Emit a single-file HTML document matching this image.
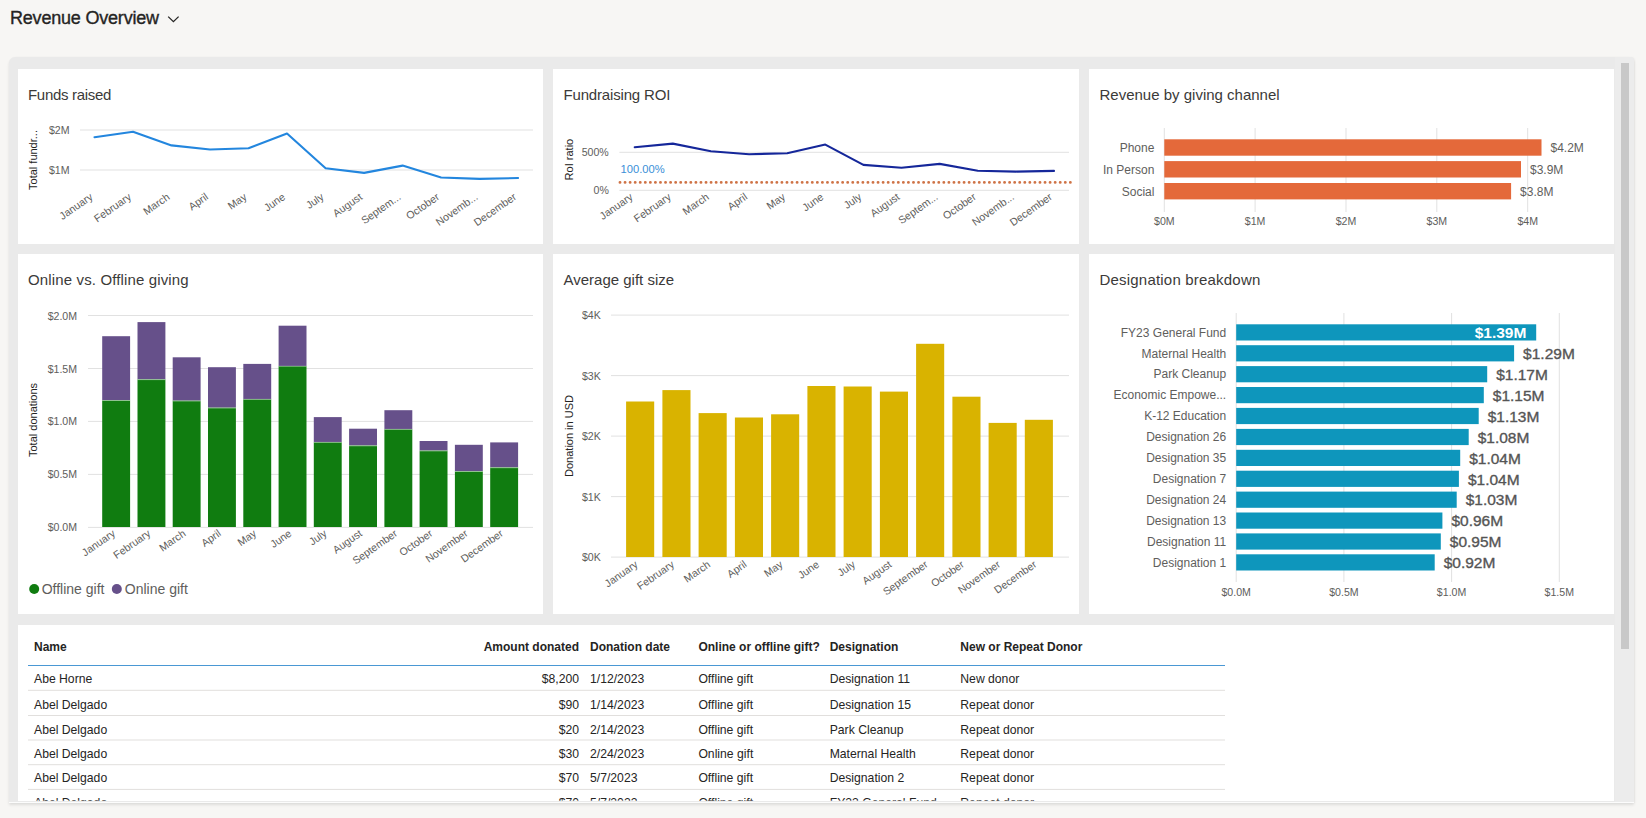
<!DOCTYPE html>
<html><head><meta charset="utf-8"><title>Revenue Overview</title>
<style>
html,body{margin:0;padding:0;}
body{width:1646px;height:818px;overflow:hidden;background:#f7f6f4;font-family:"Liberation Sans", sans-serif;position:relative;}
.hdr{position:absolute;left:10px;top:6px;font-size:18px;letter-spacing:-0.2px;-webkit-text-stroke:0.35px #252423;color:#252423;line-height:24px;white-space:nowrap;}
.chev{position:absolute;left:168px;top:14px;}
.frame{position:absolute;left:8.5px;top:57px;width:1625.5px;height:744.5px;background:#eaeaea;border-radius:6px 4px 0 0;border-bottom:1.7px solid #fcfcfc;box-shadow:0 2px 3px rgba(0,0,0,0.10), 1px 0 2px rgba(0,0,0,0.04);}
.inner{position:absolute;left:1614.5px;top:57px;width:19.5px;height:744.5px;background:#ececec;border-radius:0 4px 0 0;}
.card{position:absolute;background:#fff;}
.ttl{position:absolute;font-size:15px;color:#3b3a39;white-space:nowrap;line-height:18px;}
.thumb{position:absolute;left:1621px;top:63px;width:8px;height:586px;background:#c8c8c8;}
svg{position:absolute;left:0;top:0;}
svg text{font-family:"Liberation Sans", sans-serif;}
</style></head><body>
<div class="hdr">Revenue Overview</div>
<svg class="chev" width="14" height="12" viewBox="0 0 14 12" style="left:166px;top:13px"><path d="M2.2 3.6 L7.4 8.7 L12.6 3.6" fill="none" stroke="#252423" stroke-width="1.3"/></svg>
<div class="frame"></div><div class="inner"></div>
<div class="card" style="left:18px;top:69px;width:525px;height:175px"></div>
<div class="card" style="left:553px;top:69px;width:526px;height:175px"></div>
<div class="card" style="left:1089px;top:69px;width:525px;height:175px"></div>
<div class="card" style="left:18px;top:254px;width:525px;height:360px"></div>
<div class="card" style="left:553px;top:254px;width:526px;height:360px"></div>
<div class="card" style="left:1089px;top:254px;width:525px;height:360px"></div>
<div class="card" style="left:18px;top:625px;width:1596px;height:176px"></div>
<div class="thumb"></div>
<div class="ttl" style="left:28px;top:86px;letter-spacing:-0.3px">Funds raised</div>
<div class="ttl" style="left:563.5px;top:86px;letter-spacing:-0.17px">Fundraising ROI</div>
<div class="ttl" style="left:1099.5px;top:86px">Revenue by giving channel</div>
<div class="ttl" style="left:28px;top:271px;letter-spacing:0.14px">Online vs. Offline giving</div>
<div class="ttl" style="left:563.5px;top:271px">Average gift size</div>
<div class="ttl" style="left:1099.5px;top:271px;letter-spacing:0.2px">Designation breakdown</div>
<svg width="1646" height="818" viewBox="0 0 1646 818">
<defs><clipPath id="tc"><rect x="17" y="625" width="1597" height="175.8"/></clipPath></defs>
<line x1="80" y1="130" x2="533" y2="130" stroke="#e1e1e1" stroke-width="1"/>
<line x1="80" y1="170" x2="533" y2="170" stroke="#e1e1e1" stroke-width="1"/>
<text x="69.5" y="134.0" font-size="10.6" fill="#605e5c" text-anchor="end" font-weight="normal" >$2M</text>
<text x="69.5" y="174.0" font-size="10.6" fill="#605e5c" text-anchor="end" font-weight="normal" >$1M</text>
<text x="0" y="0" font-size="11" fill="#252423" text-anchor="middle" transform="translate(36.5,160) rotate(-90)">Total fundr...</text>
<polyline fill="none" stroke="#2386de" stroke-width="2.1" stroke-linejoin="round" stroke-linecap="round" points="94.5,137.2 133.0,131.8 171.5,145.4 210.0,149.5 248.5,148.3 287.0,133.5 325.6,168.3 364.1,172.9 402.6,165.6 441.1,177.5 479.6,178.9 518.1,178.0"/>
<text x="0" y="0" font-size="10.6" fill="#605e5c" text-anchor="end" transform="translate(93.5,198.5) rotate(-35)">January</text>
<text x="0" y="0" font-size="10.6" fill="#605e5c" text-anchor="end" transform="translate(132.0,198.5) rotate(-35)">February</text>
<text x="0" y="0" font-size="10.6" fill="#605e5c" text-anchor="end" transform="translate(170.5,198.5) rotate(-35)">March</text>
<text x="0" y="0" font-size="10.6" fill="#605e5c" text-anchor="end" transform="translate(209.0,198.5) rotate(-35)">April</text>
<text x="0" y="0" font-size="10.6" fill="#605e5c" text-anchor="end" transform="translate(247.5,198.5) rotate(-35)">May</text>
<text x="0" y="0" font-size="10.6" fill="#605e5c" text-anchor="end" transform="translate(286.0,198.5) rotate(-35)">June</text>
<text x="0" y="0" font-size="10.6" fill="#605e5c" text-anchor="end" transform="translate(324.6,198.5) rotate(-35)">July</text>
<text x="0" y="0" font-size="10.6" fill="#605e5c" text-anchor="end" transform="translate(363.1,198.5) rotate(-35)">August</text>
<text x="0" y="0" font-size="10.6" fill="#605e5c" text-anchor="end" transform="translate(401.6,198.5) rotate(-35)">Septem...</text>
<text x="0" y="0" font-size="10.6" fill="#605e5c" text-anchor="end" transform="translate(440.1,198.5) rotate(-35)">October</text>
<text x="0" y="0" font-size="10.6" fill="#605e5c" text-anchor="end" transform="translate(478.6,198.5) rotate(-35)">Novemb...</text>
<text x="0" y="0" font-size="10.6" fill="#605e5c" text-anchor="end" transform="translate(517.1,198.5) rotate(-35)">December</text>
<line x1="619.4" y1="152.3" x2="1069" y2="152.3" stroke="#e1e1e1" stroke-width="1"/>
<line x1="619.4" y1="190.3" x2="1069" y2="190.3" stroke="#e1e1e1" stroke-width="1"/>
<text x="608.8" y="156.3" font-size="10.6" fill="#605e5c" text-anchor="end" font-weight="normal" >500%</text>
<text x="608.8" y="194.3" font-size="10.6" fill="#605e5c" text-anchor="end" font-weight="normal" >0%</text>
<text x="0" y="0" font-size="11" fill="#252423" text-anchor="middle" transform="translate(572.5,159.6) rotate(-90)">RoI ratio</text>
<line x1="620" y1="182.4" x2="1071" y2="182.4" stroke="#cf7346" stroke-width="2.9" stroke-dasharray="0 5.06" stroke-linecap="round"/>
<text x="620.6" y="173.4" font-size="11.2" fill="#3a8fd8" text-anchor="start" font-weight="normal" >100.00%</text>
<polyline fill="none" stroke="#15279a" stroke-width="2.1" stroke-linejoin="round" stroke-linecap="round" points="634.7,147.2 672.8,143.6 710.9,151.3 749.1,154.2 787.2,153.3 825.3,144.6 863.4,164.9 901.5,167.8 939.7,163.9 977.8,170.7 1015.9,171.6 1054.0,170.9"/>
<text x="0" y="0" font-size="10.6" fill="#605e5c" text-anchor="end" transform="translate(633.7,198.5) rotate(-35)">January</text>
<text x="0" y="0" font-size="10.6" fill="#605e5c" text-anchor="end" transform="translate(671.8,198.5) rotate(-35)">February</text>
<text x="0" y="0" font-size="10.6" fill="#605e5c" text-anchor="end" transform="translate(709.9,198.5) rotate(-35)">March</text>
<text x="0" y="0" font-size="10.6" fill="#605e5c" text-anchor="end" transform="translate(748.1,198.5) rotate(-35)">April</text>
<text x="0" y="0" font-size="10.6" fill="#605e5c" text-anchor="end" transform="translate(786.2,198.5) rotate(-35)">May</text>
<text x="0" y="0" font-size="10.6" fill="#605e5c" text-anchor="end" transform="translate(824.3,198.5) rotate(-35)">June</text>
<text x="0" y="0" font-size="10.6" fill="#605e5c" text-anchor="end" transform="translate(862.4,198.5) rotate(-35)">July</text>
<text x="0" y="0" font-size="10.6" fill="#605e5c" text-anchor="end" transform="translate(900.5,198.5) rotate(-35)">August</text>
<text x="0" y="0" font-size="10.6" fill="#605e5c" text-anchor="end" transform="translate(938.7,198.5) rotate(-35)">Septem...</text>
<text x="0" y="0" font-size="10.6" fill="#605e5c" text-anchor="end" transform="translate(976.8,198.5) rotate(-35)">October</text>
<text x="0" y="0" font-size="10.6" fill="#605e5c" text-anchor="end" transform="translate(1014.9,198.5) rotate(-35)">Novemb...</text>
<text x="0" y="0" font-size="10.6" fill="#605e5c" text-anchor="end" transform="translate(1053.0,198.5) rotate(-35)">December</text>
<line x1="1164.3" y1="128" x2="1164.3" y2="212" stroke="#e1e1e1" stroke-width="1"/>
<text x="1164.3" y="225.0" font-size="10.6" fill="#605e5c" text-anchor="middle" font-weight="normal" >$0M</text>
<line x1="1255.1" y1="128" x2="1255.1" y2="212" stroke="#e1e1e1" stroke-width="1"/>
<text x="1255.1" y="225.0" font-size="10.6" fill="#605e5c" text-anchor="middle" font-weight="normal" >$1M</text>
<line x1="1346.0" y1="128" x2="1346.0" y2="212" stroke="#e1e1e1" stroke-width="1"/>
<text x="1346.0" y="225.0" font-size="10.6" fill="#605e5c" text-anchor="middle" font-weight="normal" >$2M</text>
<line x1="1436.8" y1="128" x2="1436.8" y2="212" stroke="#e1e1e1" stroke-width="1"/>
<text x="1436.8" y="225.0" font-size="10.6" fill="#605e5c" text-anchor="middle" font-weight="normal" >$3M</text>
<line x1="1527.7" y1="128" x2="1527.7" y2="212" stroke="#e1e1e1" stroke-width="1"/>
<text x="1527.7" y="225.0" font-size="10.6" fill="#605e5c" text-anchor="middle" font-weight="normal" >$4M</text>
<rect x="1164.3" y="139.3" width="377.2" height="16.4" fill="#e4693a"/>
<text x="1154.4" y="151.9" font-size="12" fill="#605e5c" text-anchor="end" font-weight="normal" >Phone</text>
<text x="1550.5" y="151.9" font-size="12" fill="#605e5c" text-anchor="start" font-weight="normal" >$4.2M</text>
<rect x="1164.3" y="161.1" width="356.7" height="16.4" fill="#e4693a"/>
<text x="1154.4" y="173.7" font-size="12" fill="#605e5c" text-anchor="end" font-weight="normal" >In Person</text>
<text x="1530.0" y="173.7" font-size="12" fill="#605e5c" text-anchor="start" font-weight="normal" >$3.9M</text>
<rect x="1164.3" y="183" width="346.8" height="16.4" fill="#e4693a"/>
<text x="1154.4" y="195.6" font-size="12" fill="#605e5c" text-anchor="end" font-weight="normal" >Social</text>
<text x="1520.1" y="195.6" font-size="12" fill="#605e5c" text-anchor="start" font-weight="normal" >$3.8M</text>
<line x1="88" y1="315.5" x2="533" y2="315.5" stroke="#e1e1e1" stroke-width="1"/>
<text x="77.1" y="319.5" font-size="10.6" fill="#605e5c" text-anchor="end" font-weight="normal" >$2.0M</text>
<line x1="88" y1="368.5" x2="533" y2="368.5" stroke="#e1e1e1" stroke-width="1"/>
<text x="77.1" y="372.5" font-size="10.6" fill="#605e5c" text-anchor="end" font-weight="normal" >$1.5M</text>
<line x1="88" y1="421.4" x2="533" y2="421.4" stroke="#e1e1e1" stroke-width="1"/>
<text x="77.1" y="425.4" font-size="10.6" fill="#605e5c" text-anchor="end" font-weight="normal" >$1.0M</text>
<line x1="88" y1="474.4" x2="533" y2="474.4" stroke="#e1e1e1" stroke-width="1"/>
<text x="77.1" y="478.4" font-size="10.6" fill="#605e5c" text-anchor="end" font-weight="normal" >$0.5M</text>
<line x1="88" y1="527.4" x2="533" y2="527.4" stroke="#e1e1e1" stroke-width="1"/>
<text x="77.1" y="531.4" font-size="10.6" fill="#605e5c" text-anchor="end" font-weight="normal" >$0.0M</text>
<rect x="102.2" y="336.2" width="27.9" height="64.0" fill="#66508a"/>
<rect x="102.2" y="400.2" width="27.9" height="126.8" fill="#107c10"/>
<rect x="102.2" y="400.0" width="27.9" height="1" fill="#ffffff" fill-opacity="0.45"/>
<rect x="137.5" y="322.1" width="27.9" height="57.2" fill="#66508a"/>
<rect x="137.5" y="379.3" width="27.9" height="147.7" fill="#107c10"/>
<rect x="137.5" y="379.1" width="27.9" height="1" fill="#ffffff" fill-opacity="0.45"/>
<rect x="172.7" y="357.3" width="27.9" height="43.4" fill="#66508a"/>
<rect x="172.7" y="400.7" width="27.9" height="126.3" fill="#107c10"/>
<rect x="172.7" y="400.5" width="27.9" height="1" fill="#ffffff" fill-opacity="0.45"/>
<rect x="208.0" y="367.2" width="27.9" height="40.5" fill="#66508a"/>
<rect x="208.0" y="407.7" width="27.9" height="119.3" fill="#107c10"/>
<rect x="208.0" y="407.5" width="27.9" height="1" fill="#ffffff" fill-opacity="0.45"/>
<rect x="243.3" y="363.9" width="27.9" height="35.2" fill="#66508a"/>
<rect x="243.3" y="399.1" width="27.9" height="127.9" fill="#107c10"/>
<rect x="243.3" y="398.9" width="27.9" height="1" fill="#ffffff" fill-opacity="0.45"/>
<rect x="278.6" y="325.7" width="27.9" height="40.3" fill="#66508a"/>
<rect x="278.6" y="366" width="27.9" height="161.0" fill="#107c10"/>
<rect x="278.6" y="365.8" width="27.9" height="1" fill="#ffffff" fill-opacity="0.45"/>
<rect x="313.8" y="417.1" width="27.9" height="25.0" fill="#66508a"/>
<rect x="313.8" y="442.1" width="27.9" height="84.9" fill="#107c10"/>
<rect x="313.8" y="441.9" width="27.9" height="1" fill="#ffffff" fill-opacity="0.45"/>
<rect x="349.1" y="428.7" width="27.9" height="16.8" fill="#66508a"/>
<rect x="349.1" y="445.5" width="27.9" height="81.5" fill="#107c10"/>
<rect x="349.1" y="445.3" width="27.9" height="1" fill="#ffffff" fill-opacity="0.45"/>
<rect x="384.4" y="410.2" width="27.9" height="18.9" fill="#66508a"/>
<rect x="384.4" y="429.1" width="27.9" height="97.9" fill="#107c10"/>
<rect x="384.4" y="428.9" width="27.9" height="1" fill="#ffffff" fill-opacity="0.45"/>
<rect x="419.6" y="441" width="27.9" height="9.6" fill="#66508a"/>
<rect x="419.6" y="450.6" width="27.9" height="76.4" fill="#107c10"/>
<rect x="419.6" y="450.4" width="27.9" height="1" fill="#ffffff" fill-opacity="0.45"/>
<rect x="454.9" y="444.8" width="27.9" height="26.4" fill="#66508a"/>
<rect x="454.9" y="471.2" width="27.9" height="55.8" fill="#107c10"/>
<rect x="454.9" y="471.0" width="27.9" height="1" fill="#ffffff" fill-opacity="0.45"/>
<rect x="490.2" y="442.4" width="27.9" height="25.0" fill="#66508a"/>
<rect x="490.2" y="467.4" width="27.9" height="59.6" fill="#107c10"/>
<rect x="490.2" y="467.2" width="27.9" height="1" fill="#ffffff" fill-opacity="0.45"/>
<text x="0" y="0" font-size="11" fill="#252423" text-anchor="middle" transform="translate(36.5,420) rotate(-90)">Total donations</text>
<text x="0" y="0" font-size="10.6" fill="#605e5c" text-anchor="end" transform="translate(116.0,535.0) rotate(-35)">January</text>
<text x="0" y="0" font-size="10.6" fill="#605e5c" text-anchor="end" transform="translate(151.3,535.0) rotate(-35)">February</text>
<text x="0" y="0" font-size="10.6" fill="#605e5c" text-anchor="end" transform="translate(186.5,535.0) rotate(-35)">March</text>
<text x="0" y="0" font-size="10.6" fill="#605e5c" text-anchor="end" transform="translate(221.8,535.0) rotate(-35)">April</text>
<text x="0" y="0" font-size="10.6" fill="#605e5c" text-anchor="end" transform="translate(257.1,535.0) rotate(-35)">May</text>
<text x="0" y="0" font-size="10.6" fill="#605e5c" text-anchor="end" transform="translate(292.4,535.0) rotate(-35)">June</text>
<text x="0" y="0" font-size="10.6" fill="#605e5c" text-anchor="end" transform="translate(327.6,535.0) rotate(-35)">July</text>
<text x="0" y="0" font-size="10.6" fill="#605e5c" text-anchor="end" transform="translate(362.9,535.0) rotate(-35)">August</text>
<text x="0" y="0" font-size="10.6" fill="#605e5c" text-anchor="end" transform="translate(398.2,535.0) rotate(-35)">September</text>
<text x="0" y="0" font-size="10.6" fill="#605e5c" text-anchor="end" transform="translate(433.4,535.0) rotate(-35)">October</text>
<text x="0" y="0" font-size="10.6" fill="#605e5c" text-anchor="end" transform="translate(468.7,535.0) rotate(-35)">November</text>
<text x="0" y="0" font-size="10.6" fill="#605e5c" text-anchor="end" transform="translate(504.0,535.0) rotate(-35)">December</text>
<circle cx="34.2" cy="589" r="5" fill="#107c10"/>
<text x="41.7" y="594.0" font-size="14" fill="#605e5c" text-anchor="start" font-weight="normal" >Offline gift</text>
<circle cx="116.8" cy="589" r="5" fill="#66508a"/>
<text x="124.8" y="594.0" font-size="14" fill="#605e5c" text-anchor="start" font-weight="normal" >Online gift</text>
<line x1="611" y1="315.1" x2="1069" y2="315.1" stroke="#e1e1e1" stroke-width="1"/>
<text x="600.8" y="319.1" font-size="10.6" fill="#605e5c" text-anchor="end" font-weight="normal" >$4K</text>
<line x1="611" y1="375.6" x2="1069" y2="375.6" stroke="#e1e1e1" stroke-width="1"/>
<text x="600.8" y="379.6" font-size="10.6" fill="#605e5c" text-anchor="end" font-weight="normal" >$3K</text>
<line x1="611" y1="436.1" x2="1069" y2="436.1" stroke="#e1e1e1" stroke-width="1"/>
<text x="600.8" y="440.1" font-size="10.6" fill="#605e5c" text-anchor="end" font-weight="normal" >$2K</text>
<line x1="611" y1="496.6" x2="1069" y2="496.6" stroke="#e1e1e1" stroke-width="1"/>
<text x="600.8" y="500.6" font-size="10.6" fill="#605e5c" text-anchor="end" font-weight="normal" >$1K</text>
<line x1="611" y1="557.1" x2="1069" y2="557.1" stroke="#e1e1e1" stroke-width="1"/>
<text x="600.8" y="561.1" font-size="10.6" fill="#605e5c" text-anchor="end" font-weight="normal" >$0K</text>
<rect x="626.1" y="401.5" width="28.1" height="155.5" fill="#d9b300"/>
<rect x="662.4" y="390.1" width="28.1" height="166.9" fill="#d9b300"/>
<rect x="698.6" y="413.1" width="28.1" height="143.9" fill="#d9b300"/>
<rect x="734.9" y="417.5" width="28.1" height="139.5" fill="#d9b300"/>
<rect x="771.1" y="414.3" width="28.1" height="142.7" fill="#d9b300"/>
<rect x="807.4" y="386" width="28.1" height="171.0" fill="#d9b300"/>
<rect x="843.6" y="386.5" width="28.1" height="170.5" fill="#d9b300"/>
<rect x="879.9" y="391.6" width="28.1" height="165.4" fill="#d9b300"/>
<rect x="916.1" y="343.8" width="28.1" height="213.2" fill="#d9b300"/>
<rect x="952.4" y="396.7" width="28.1" height="160.3" fill="#d9b300"/>
<rect x="988.6" y="422.9" width="28.1" height="134.1" fill="#d9b300"/>
<rect x="1024.8" y="419.8" width="28.1" height="137.2" fill="#d9b300"/>
<text x="0" y="0" font-size="11" fill="#252423" text-anchor="middle" transform="translate(572.5,436) rotate(-90)">Donation in USD</text>
<text x="0" y="0" font-size="10.6" fill="#605e5c" text-anchor="end" transform="translate(638.7,566.0) rotate(-35)">January</text>
<text x="0" y="0" font-size="10.6" fill="#605e5c" text-anchor="end" transform="translate(675.0,566.0) rotate(-35)">February</text>
<text x="0" y="0" font-size="10.6" fill="#605e5c" text-anchor="end" transform="translate(711.2,566.0) rotate(-35)">March</text>
<text x="0" y="0" font-size="10.6" fill="#605e5c" text-anchor="end" transform="translate(747.5,566.0) rotate(-35)">April</text>
<text x="0" y="0" font-size="10.6" fill="#605e5c" text-anchor="end" transform="translate(783.7,566.0) rotate(-35)">May</text>
<text x="0" y="0" font-size="10.6" fill="#605e5c" text-anchor="end" transform="translate(820.0,566.0) rotate(-35)">June</text>
<text x="0" y="0" font-size="10.6" fill="#605e5c" text-anchor="end" transform="translate(856.2,566.0) rotate(-35)">July</text>
<text x="0" y="0" font-size="10.6" fill="#605e5c" text-anchor="end" transform="translate(892.5,566.0) rotate(-35)">August</text>
<text x="0" y="0" font-size="10.6" fill="#605e5c" text-anchor="end" transform="translate(928.7,566.0) rotate(-35)">September</text>
<text x="0" y="0" font-size="10.6" fill="#605e5c" text-anchor="end" transform="translate(965.0,566.0) rotate(-35)">October</text>
<text x="0" y="0" font-size="10.6" fill="#605e5c" text-anchor="end" transform="translate(1001.2,566.0) rotate(-35)">November</text>
<text x="0" y="0" font-size="10.6" fill="#605e5c" text-anchor="end" transform="translate(1037.4,566.0) rotate(-35)">December</text>
<line x1="1236.2" y1="313" x2="1236.2" y2="582" stroke="#e1e1e1" stroke-width="1"/>
<text x="1236.2" y="596.0" font-size="10.6" fill="#605e5c" text-anchor="middle" font-weight="normal" >$0.0M</text>
<line x1="1343.9" y1="313" x2="1343.9" y2="582" stroke="#e1e1e1" stroke-width="1"/>
<text x="1343.9" y="596.0" font-size="10.6" fill="#605e5c" text-anchor="middle" font-weight="normal" >$0.5M</text>
<line x1="1451.6" y1="313" x2="1451.6" y2="582" stroke="#e1e1e1" stroke-width="1"/>
<text x="1451.6" y="596.0" font-size="10.6" fill="#605e5c" text-anchor="middle" font-weight="normal" >$1.0M</text>
<line x1="1559.3" y1="313" x2="1559.3" y2="582" stroke="#e1e1e1" stroke-width="1"/>
<text x="1559.3" y="596.0" font-size="10.6" fill="#605e5c" text-anchor="middle" font-weight="normal" >$1.5M</text>
<rect x="1236.2" y="324.3" width="300.0" height="16.2" fill="#0e96bc"/>
<text x="1226.2" y="336.6" font-size="12" fill="#605e5c" text-anchor="end" font-weight="normal" >FY23 General Fund</text>
<text x="1526.4" y="337.9" font-size="15.5" fill="#ffffff" text-anchor="end" font-weight="bold" >$1.39M</text>
<rect x="1236.2" y="345.2" width="277.9" height="16.2" fill="#0e96bc"/>
<text x="1226.2" y="357.5" font-size="12" fill="#605e5c" text-anchor="end" font-weight="normal" >Maternal Health</text>
<text x="1523.1" y="359.0" font-size="15.5" fill="#555555" text-anchor="start" font-weight="normal" stroke="#555555" stroke-width="0.35">$1.29M</text>
<rect x="1236.2" y="366.1" width="251.0" height="16.2" fill="#0e96bc"/>
<text x="1226.2" y="378.4" font-size="12" fill="#605e5c" text-anchor="end" font-weight="normal" >Park Cleanup</text>
<text x="1496.2" y="379.9" font-size="15.5" fill="#555555" text-anchor="start" font-weight="normal" stroke="#555555" stroke-width="0.35">$1.17M</text>
<rect x="1236.2" y="387.0" width="247.6" height="16.2" fill="#0e96bc"/>
<text x="1226.2" y="399.3" font-size="12" fill="#605e5c" text-anchor="end" font-weight="normal" >Economic Empowe...</text>
<text x="1492.8" y="400.8" font-size="15.5" fill="#555555" text-anchor="start" font-weight="normal" stroke="#555555" stroke-width="0.35">$1.15M</text>
<rect x="1236.2" y="407.9" width="242.5" height="16.2" fill="#0e96bc"/>
<text x="1226.2" y="420.2" font-size="12" fill="#605e5c" text-anchor="end" font-weight="normal" >K-12 Education</text>
<text x="1487.7" y="421.7" font-size="15.5" fill="#555555" text-anchor="start" font-weight="normal" stroke="#555555" stroke-width="0.35">$1.13M</text>
<rect x="1236.2" y="428.9" width="232.5" height="16.2" fill="#0e96bc"/>
<text x="1226.2" y="441.2" font-size="12" fill="#605e5c" text-anchor="end" font-weight="normal" >Designation 26</text>
<text x="1477.7" y="442.7" font-size="15.5" fill="#555555" text-anchor="start" font-weight="normal" stroke="#555555" stroke-width="0.35">$1.08M</text>
<rect x="1236.2" y="449.8" width="224.0" height="16.2" fill="#0e96bc"/>
<text x="1226.2" y="462.1" font-size="12" fill="#605e5c" text-anchor="end" font-weight="normal" >Designation 35</text>
<text x="1469.2" y="463.6" font-size="15.5" fill="#555555" text-anchor="start" font-weight="normal" stroke="#555555" stroke-width="0.35">$1.04M</text>
<rect x="1236.2" y="470.7" width="222.7" height="16.2" fill="#0e96bc"/>
<text x="1226.2" y="483.0" font-size="12" fill="#605e5c" text-anchor="end" font-weight="normal" >Designation 7</text>
<text x="1467.9" y="484.5" font-size="15.5" fill="#555555" text-anchor="start" font-weight="normal" stroke="#555555" stroke-width="0.35">$1.04M</text>
<rect x="1236.2" y="491.6" width="220.5" height="16.2" fill="#0e96bc"/>
<text x="1226.2" y="503.9" font-size="12" fill="#605e5c" text-anchor="end" font-weight="normal" >Designation 24</text>
<text x="1465.7" y="505.4" font-size="15.5" fill="#555555" text-anchor="start" font-weight="normal" stroke="#555555" stroke-width="0.35">$1.03M</text>
<rect x="1236.2" y="512.5" width="206.2" height="16.2" fill="#0e96bc"/>
<text x="1226.2" y="524.8" font-size="12" fill="#605e5c" text-anchor="end" font-weight="normal" >Designation 13</text>
<text x="1451.4" y="526.3" font-size="15.5" fill="#555555" text-anchor="start" font-weight="normal" stroke="#555555" stroke-width="0.35">$0.96M</text>
<rect x="1236.2" y="533.4" width="204.6" height="16.2" fill="#0e96bc"/>
<text x="1226.2" y="545.7" font-size="12" fill="#605e5c" text-anchor="end" font-weight="normal" >Designation 11</text>
<text x="1449.8" y="547.2" font-size="15.5" fill="#555555" text-anchor="start" font-weight="normal" stroke="#555555" stroke-width="0.35">$0.95M</text>
<rect x="1236.2" y="554.3" width="198.5" height="16.2" fill="#0e96bc"/>
<text x="1226.2" y="566.6" font-size="12" fill="#605e5c" text-anchor="end" font-weight="normal" >Designation 1</text>
<text x="1443.7" y="568.1" font-size="15.5" fill="#555555" text-anchor="start" font-weight="normal" stroke="#555555" stroke-width="0.35">$0.92M</text>
<g clip-path="url(#tc)">
<text x="34.0" y="651.2" font-size="12" fill="#252423" text-anchor="start" font-weight="bold" >Name</text>
<text x="579.0" y="651.2" font-size="12" fill="#252423" text-anchor="end" font-weight="bold" >Amount donated</text>
<text x="590.0" y="651.2" font-size="12" fill="#252423" text-anchor="start" font-weight="bold" >Donation date</text>
<text x="698.4" y="651.2" font-size="12" fill="#252423" text-anchor="start" font-weight="bold" >Online or offline gift?</text>
<text x="829.7" y="651.2" font-size="12" fill="#252423" text-anchor="start" font-weight="bold" >Designation</text>
<text x="960.3" y="651.2" font-size="12" fill="#252423" text-anchor="start" font-weight="bold" >New or Repeat Donor</text>
<line x1="28" y1="665.5" x2="1225" y2="665.5" stroke="#4a98d4" stroke-width="1"/>
<text x="34.0" y="683.3" font-size="12.2" fill="#252423" text-anchor="start" font-weight="normal" >Abe Horne</text>
<text x="579.0" y="683.3" font-size="12.2" fill="#252423" text-anchor="end" font-weight="normal" >$8,200</text>
<text x="590.0" y="683.3" font-size="12.2" fill="#252423" text-anchor="start" font-weight="normal" >1/12/2023</text>
<text x="698.4" y="683.3" font-size="12.2" fill="#252423" text-anchor="start" font-weight="normal" >Offline gift</text>
<text x="829.7" y="683.3" font-size="12.2" fill="#252423" text-anchor="start" font-weight="normal" >Designation 11</text>
<text x="960.3" y="683.3" font-size="12.2" fill="#252423" text-anchor="start" font-weight="normal" >New donor</text>
<text x="34.0" y="709.2" font-size="12.2" fill="#252423" text-anchor="start" font-weight="normal" >Abel Delgado</text>
<text x="579.0" y="709.2" font-size="12.2" fill="#252423" text-anchor="end" font-weight="normal" >$90</text>
<text x="590.0" y="709.2" font-size="12.2" fill="#252423" text-anchor="start" font-weight="normal" >1/14/2023</text>
<text x="698.4" y="709.2" font-size="12.2" fill="#252423" text-anchor="start" font-weight="normal" >Offline gift</text>
<text x="829.7" y="709.2" font-size="12.2" fill="#252423" text-anchor="start" font-weight="normal" >Designation 15</text>
<text x="960.3" y="709.2" font-size="12.2" fill="#252423" text-anchor="start" font-weight="normal" >Repeat donor</text>
<text x="34.0" y="733.6" font-size="12.2" fill="#252423" text-anchor="start" font-weight="normal" >Abel Delgado</text>
<text x="579.0" y="733.6" font-size="12.2" fill="#252423" text-anchor="end" font-weight="normal" >$20</text>
<text x="590.0" y="733.6" font-size="12.2" fill="#252423" text-anchor="start" font-weight="normal" >2/14/2023</text>
<text x="698.4" y="733.6" font-size="12.2" fill="#252423" text-anchor="start" font-weight="normal" >Offline gift</text>
<text x="829.7" y="733.6" font-size="12.2" fill="#252423" text-anchor="start" font-weight="normal" >Park Cleanup</text>
<text x="960.3" y="733.6" font-size="12.2" fill="#252423" text-anchor="start" font-weight="normal" >Repeat donor</text>
<text x="34.0" y="758.0" font-size="12.2" fill="#252423" text-anchor="start" font-weight="normal" >Abel Delgado</text>
<text x="579.0" y="758.0" font-size="12.2" fill="#252423" text-anchor="end" font-weight="normal" >$30</text>
<text x="590.0" y="758.0" font-size="12.2" fill="#252423" text-anchor="start" font-weight="normal" >2/24/2023</text>
<text x="698.4" y="758.0" font-size="12.2" fill="#252423" text-anchor="start" font-weight="normal" >Online gift</text>
<text x="829.7" y="758.0" font-size="12.2" fill="#252423" text-anchor="start" font-weight="normal" >Maternal Health</text>
<text x="960.3" y="758.0" font-size="12.2" fill="#252423" text-anchor="start" font-weight="normal" >Repeat donor</text>
<text x="34.0" y="782.0" font-size="12.2" fill="#252423" text-anchor="start" font-weight="normal" >Abel Delgado</text>
<text x="579.0" y="782.0" font-size="12.2" fill="#252423" text-anchor="end" font-weight="normal" >$70</text>
<text x="590.0" y="782.0" font-size="12.2" fill="#252423" text-anchor="start" font-weight="normal" >5/7/2023</text>
<text x="698.4" y="782.0" font-size="12.2" fill="#252423" text-anchor="start" font-weight="normal" >Offline gift</text>
<text x="829.7" y="782.0" font-size="12.2" fill="#252423" text-anchor="start" font-weight="normal" >Designation 2</text>
<text x="960.3" y="782.0" font-size="12.2" fill="#252423" text-anchor="start" font-weight="normal" >Repeat donor</text>
<text x="34.0" y="806.6" font-size="12.2" fill="#252423" text-anchor="start" font-weight="normal" >Abel Delgado</text>
<text x="579.0" y="806.6" font-size="12.2" fill="#252423" text-anchor="end" font-weight="normal" >$70</text>
<text x="590.0" y="806.6" font-size="12.2" fill="#252423" text-anchor="start" font-weight="normal" >5/7/2023</text>
<text x="698.4" y="806.6" font-size="12.2" fill="#252423" text-anchor="start" font-weight="normal" >Offline gift</text>
<text x="829.7" y="806.6" font-size="12.2" fill="#252423" text-anchor="start" font-weight="normal" >FY23 General Fund</text>
<text x="960.3" y="806.6" font-size="12.2" fill="#252423" text-anchor="start" font-weight="normal" >Repeat donor</text>
<line x1="28" y1="690.3" x2="1225" y2="690.3" stroke="#e1dfdd" stroke-width="1"/>
<line x1="28" y1="715.5" x2="1225" y2="715.5" stroke="#e1dfdd" stroke-width="1"/>
<line x1="28" y1="740" x2="1225" y2="740" stroke="#e1dfdd" stroke-width="1"/>
<line x1="28" y1="764.7" x2="1225" y2="764.7" stroke="#e1dfdd" stroke-width="1"/>
<line x1="28" y1="789.4" x2="1225" y2="789.4" stroke="#e1dfdd" stroke-width="1"/>
</g>
</svg>
</body></html>
